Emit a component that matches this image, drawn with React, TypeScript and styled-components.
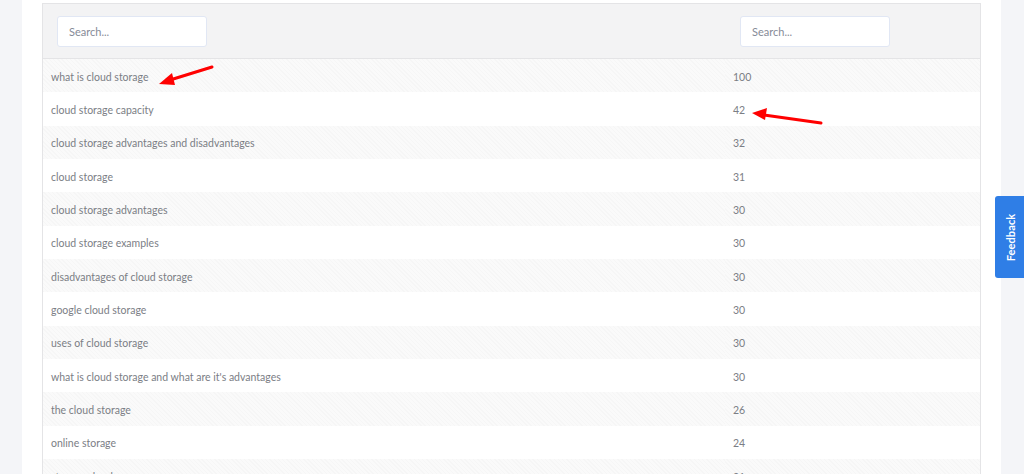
import React from "react";
import styled, { createGlobalStyle } from "styled-components";

const Global = createGlobalStyle`
  html, body { margin: 0; padding: 0; background: #f4f5f8; }
  body { font-family: "Lato", "Open Sans", sans-serif; overflow: hidden; }
`;

const Page = styled.div`
  width: 1024px;
  height: 474px;
  display: flex;
  position: relative;
  overflow: hidden;
`;

const Panel = styled.div`
  margin-left: 22px;
  width: 979px;
  background: #ffffff;
  padding: 3px 20px 0 20px;
  box-sizing: border-box;
`;

const Table = styled.div`
  border: 1px solid #e4e4e6;
  border-bottom: none;
  display: grid;
  grid-template-columns: 682px 1fr;
`;

const HeadCell = styled.div<{ $pad: number }>`
  background: #f3f3f4;
  height: 54px;
  display: flex;
  align-items: center;
  padding-left: ${(p) => p.$pad}px;
  border-bottom: 1px solid #e4e4e6;
`;

const Search = styled.input`
  width: 150px;
  height: 31px;
  box-sizing: border-box;
  border: 1px solid #e1e7f4;
  border-radius: 3px;
  background: #ffffff;
  padding: 0 0 0 11px;
  font-family: "Lato", sans-serif;
  font-size: 11px;
  color: #6f7480;
  outline: none;
  &::placeholder { color: #868b97; }
`;

const Cell = styled.div<{ $striped: boolean; $pad: number }>`
  height: 33.33px;
  box-sizing: border-box;
  display: flex;
  align-items: center;
  padding-left: ${(p) => p.$pad}px;
  padding-top: 2px;
  font-size: 10.5px;
  color: #7b7e85;
  background: ${(p) =>
    p.$striped
      ? "repeating-linear-gradient(45deg, #f6f6f6 0px, #f6f6f6 1px, #fafafa 1px, #fafafa 3px)"
      : "#ffffff"};
`;

const Feedback = styled.div`
  position: absolute;
  left: 995px;
  top: 196px;
  width: 34px;
  height: 82px;
  background: #2f7ee6;
  border-radius: 3px 0 0 3px;
  display: flex;
  align-items: center;
  justify-content: flex-start;
`;

const FeedbackText = styled.span`
  display: block;
  transform: rotate(-90deg);
  color: #ffffff;
  font-family: "Lato", sans-serif;
  font-weight: 700;
  font-size: 11px;
  margin-left: -8px;
  letter-spacing: 0.1px;
`;

const Overlay = styled.svg`
  position: absolute;
  left: 0;
  top: 0;
  pointer-events: none;
`;

const rows: [string, string][] = [
  ["what is cloud storage", "100"],
  ["cloud storage capacity", "42"],
  ["cloud storage advantages and disadvantages", "32"],
  ["cloud storage", "31"],
  ["cloud storage advantages", "30"],
  ["cloud storage examples", "30"],
  ["disadvantages of cloud storage", "30"],
  ["google cloud storage", "30"],
  ["uses of cloud storage", "30"],
  ["what is cloud storage and what are it's advantages", "30"],
  ["the cloud storage", "26"],
  ["online storage", "24"],
  ["storage cloud", "21"],
];

export default function App() {
  return (
    <Page>
      <Global />
      <Panel>
        <Table>
          <HeadCell $pad={14}>
            <Search placeholder="Search..." />
          </HeadCell>
          <HeadCell $pad={15}>
            <Search placeholder="Search..." />
          </HeadCell>
          {rows.map(([k, v], i) => (
            <React.Fragment key={i}>
              <Cell $striped={i % 2 === 0} $pad={8}>{k}</Cell>
              <Cell $striped={i % 2 === 0} $pad={8}>{v}</Cell>
            </React.Fragment>
          ))}
        </Table>
      </Panel>
      <Feedback>
        <FeedbackText>Feedback</FeedbackText>
      </Feedback>
      <Overlay width="1024" height="474" viewBox="0 0 1024 474">
        <line x1="212" y1="67" x2="170" y2="80" stroke="#f00" strokeWidth="3" strokeLinecap="round" />
        <polygon points="159,84 172,73 175,85" fill="#f00" />
        <line x1="821" y1="123" x2="764" y2="115" stroke="#f00" strokeWidth="3" strokeLinecap="round" />
        <polygon points="752,113 767,108 765,120" fill="#f00" />
      </Overlay>
    </Page>
  );
}
